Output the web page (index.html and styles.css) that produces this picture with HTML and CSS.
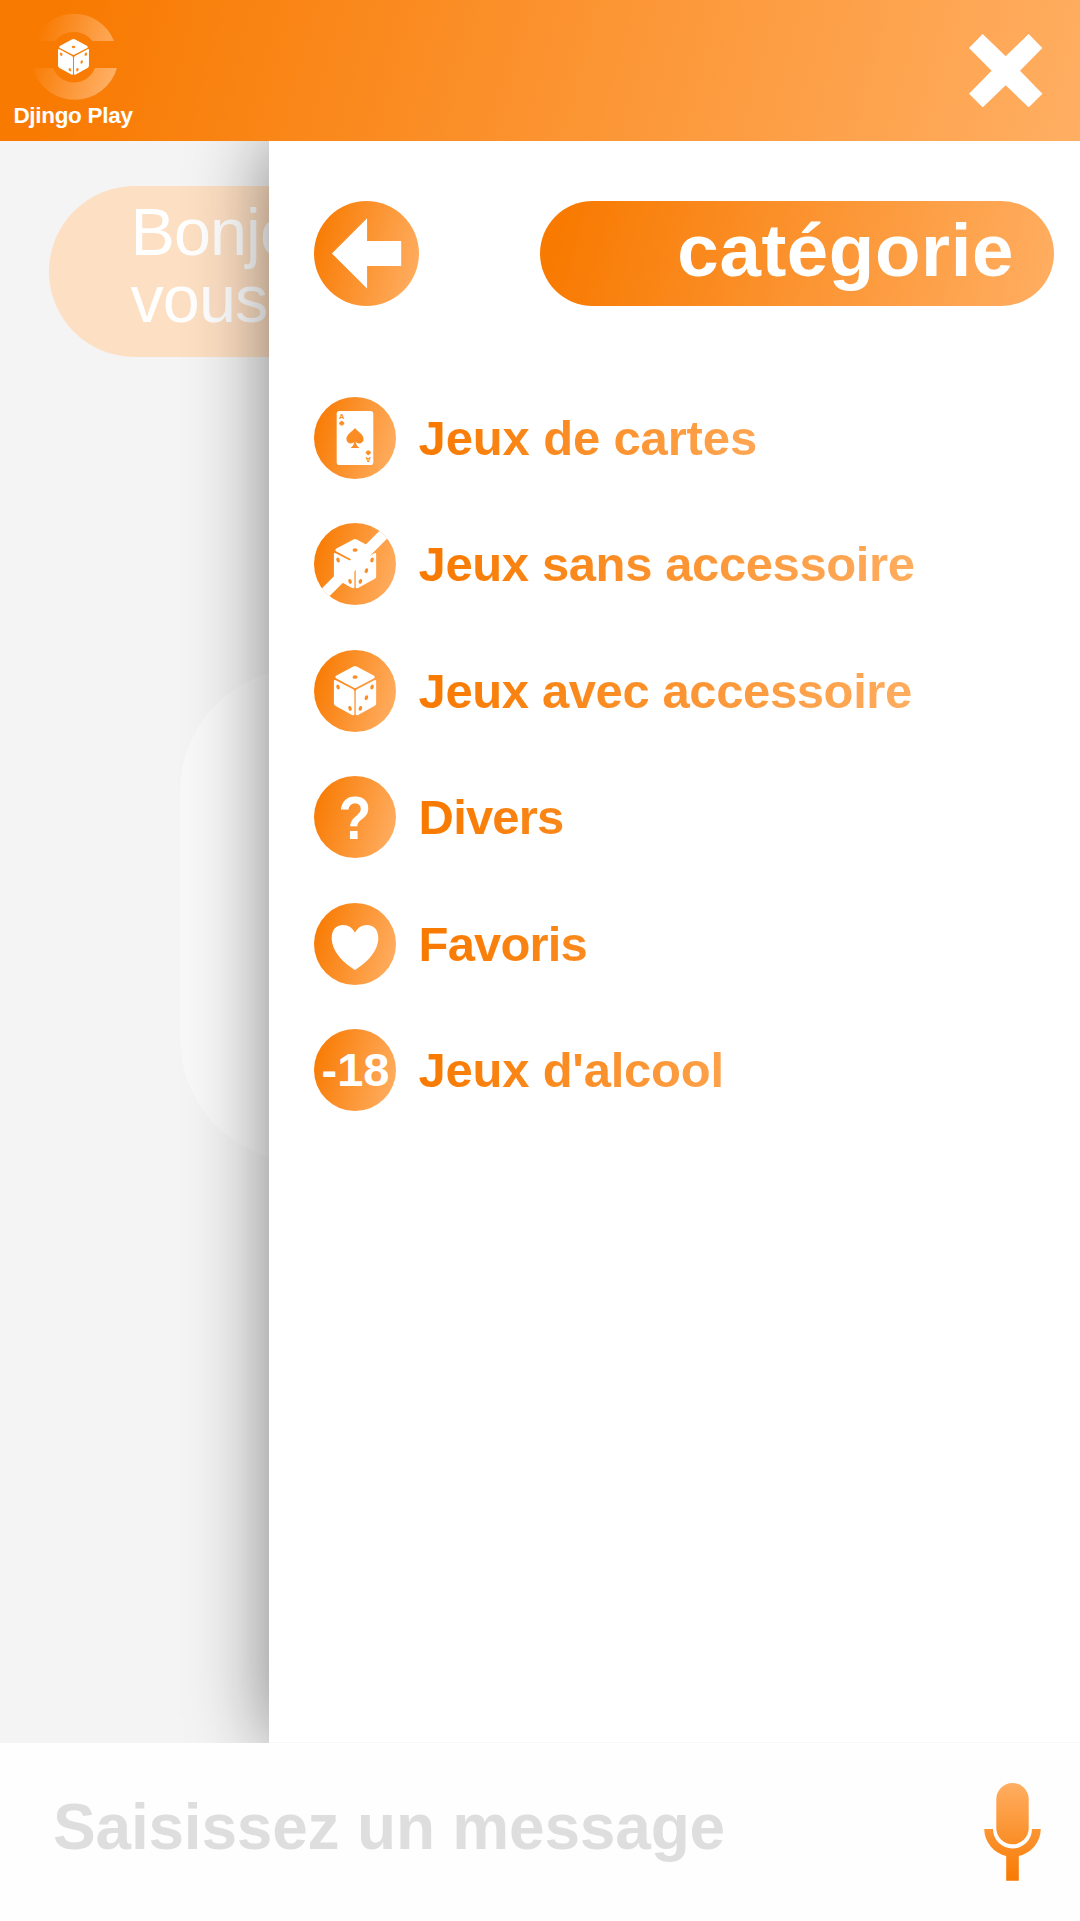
FILE: index.html
```html
<!DOCTYPE html>
<html lang="fr">
<head>
<meta charset="utf-8">
<title>Djingo Play</title>
<link rel="stylesheet" href="styles.css">
</head>
<body>
<svg class="defs" width="0" height="0" aria-hidden="true">
  <defs>
    <symbol id="die" viewBox="0 0 128 149">
      <path fill="#fff" d="M59 1.500Q64-1.500 69 1.500L121 29Q125 33 121 37L69 64.500Q64 67.500 59 64.500L7 37Q3 33 7 29Z"/>
      <path fill="#fff" d="M0 46Q0 40 6 42.500L58 70Q62 72.500 62 77V144Q62 149.500 55 147L6 120Q0 117 0 111Z"/>
      <path fill="#fff" d="M128 46Q128 40 122 42.500L70 70Q66 72.500 66 77V144Q66 149.500 73 147L122 120Q128 117 128 111Z"/>
      <g fill="#fb8d24">
        <ellipse cx="64" cy="33" rx="7.500" ry="5.500"/>
        <ellipse cx="13" cy="63" rx="5" ry="7.500" transform="rotate(-20 13 63)"/>
        <ellipse cx="49" cy="127" rx="5" ry="7.500" transform="rotate(-20 49 127)"/>
        <ellipse cx="115" cy="63" rx="5" ry="7.500" transform="rotate(20 115 63)"/>
        <ellipse cx="98" cy="95" rx="5" ry="7.500" transform="rotate(20 98 95)"/>
        <ellipse cx="80" cy="127" rx="5" ry="7.500" transform="rotate(20 80 127)"/>
      </g>
    </symbol>
    <linearGradient id="ring" gradientUnits="userSpaceOnUse" x1="36" y1="40" x2="116" y2="64">
      <stop offset="0" stop-color="#ffae62" stop-opacity="0"/>
      <stop offset="1" stop-color="#ffae62"/>
    </linearGradient>
    <linearGradient id="mic" gradientUnits="userSpaceOnUse" x1="28" y1="0" x2="28" y2="98">
      <stop offset="0" stop-color="#ffae62"/>
      <stop offset="1" stop-color="#f87a01"/>
    </linearGradient>
  </defs>
</svg>

<div class="app">
  <header class="header">
    <div class="brand">
      <svg class="brand-logo" viewBox="0 0 146 102">
        <path fill="url(#ring)" d="M34 41A43 43 0 0 1 114 41H92.500A24 24 0 0 0 55 41Z"/>
        <path fill="url(#ring)" d="M32.500 68A44 44 0 0 0 117 68H95A22.500 22.500 0 0 1 53 68Z"/>
        <use href="#die" x="58" y="39" width="31" height="36"/>
      </svg>
      <span class="brand-name">Djingo Play</span>
    </div>
    <svg class="close" viewBox="0 0 73.400 73.400">
      <path fill="#fff" d="M13.700 0L36.700 22.300L59.700 0L73.400 14L51 36.700L73.400 59.700L59.700 73.400L36.700 51.200L13.700 73.400L0 59.700L22.600 36.700L0 14Z"/>
    </svg>
  </header>

  <main class="content">
    <section class="chat">
      <p class="bubble bubble-bot">Bonjour<br>vous</p>
      <div class="bubble-user"></div>
    </section>

    <nav class="panel">
      <div class="panel-head">
        <svg class="back" viewBox="0 0 105.600 105.600">
          <path fill="#fff" d="M18 52.800L53.400 17.300V40.300H87.700V65.300H53.400V88Z"/>
        </svg>
        <h1 class="title">catégorie</h1>
      </div>
      <ul class="menu">
        <li class="item">
          <svg class="badge" viewBox="0 0 82 82">
            <rect x="22.700" y="14" width="36.600" height="54" rx="2.800" fill="#fff"/>
            <path fill="#fb8d24" d="M41 31C43.500 34.500 49.600 37 49.600 42C49.600 46.500 44 48 41.800 44.800C42 48 43.500 49.500 45.500 51H36.500C38.500 49.500 40 48 40.200 44.800C38 48 32.400 46.500 32.400 42C32.400 37 38.500 34.500 41 31Z"/>
            <g id="corner" fill="#fb8d24">
              <text class="card-letter" x="27.700" y="22">A</text>
              <circle cx="27.700" cy="25" r="1.300"/><circle cx="26.400" cy="26.400" r="1.300"/><circle cx="29" cy="26.400" r="1.300"/><path d="M27.200 26H28.200L29 28.400H26.400Z"/>
            </g>
            <use href="#corner" transform="rotate(180 41 41)"/>
          </svg>
          <span class="label label-cards">Jeux de cartes</span>
        </li>
        <li class="item">
          <svg class="badge" viewBox="0 0 82 82">
            <use href="#die" x="19.700" y="16" width="42.700" height="49.700"/>
            <path fill="#fff" d="M73.300 0H88.700L0 88.700V73.300Z"/>
          </svg>
          <span class="label label-long">Jeux sans accessoire</span>
        </li>
        <li class="item">
          <svg class="badge" viewBox="0 0 82 82">
            <use href="#die" x="19.700" y="16" width="42.700" height="49.700"/>
          </svg>
          <span class="label label-long">Jeux avec accessoire</span>
        </li>
        <li class="item">
          <svg class="badge" viewBox="0 0 82 82">
            <text class="glyph glyph-question" transform="translate(41 63.300) scale(.88 1)">?</text>
          </svg>
          <span class="label label-short">Divers</span>
        </li>
        <li class="item">
          <svg class="badge" viewBox="0 0 82 82">
            <path fill="#fff" d="M41 67C33 62 17.700 50.500 17.700 35C17.700 27 22 22 29 22C34.500 22 38.500 25 41 29.700C43.500 25 47.500 22 53 22C60 22 64.300 27 64.300 35C64.300 50.500 49 62 41 67Z"/>
          </svg>
          <span class="label label-short">Favoris</span>
        </li>
        <li class="item">
          <svg class="badge" viewBox="0 0 82 82">
            <text class="glyph glyph-age" x="41.500" y="56.500">-18</text>
          </svg>
          <span class="label label-alcohol">Jeux d'alcool</span>
        </li>
      </ul>
    </nav>
  </main>

  <footer class="composer">
    <span class="placeholder">Saisissez un message</span>
    <svg class="mic" viewBox="0 0 57 98">
      <g fill="url(#mic)">
        <rect x="12.300" y="0" width="32.400" height="61.300" rx="16.200"/>
        <path d="M.2 46H9A19.500 19.500 0 0 0 48 46H56.800A28.300 28.300 0 0 1 34.800 73V97.700H22.200V73A28.300 28.300 0 0 1 .2 46Z"/>
      </g>
    </svg>
  </footer>
</div>
</body>
</html>
```

FILE: styles.css
```css
* {
  box-sizing: border-box;
  margin: 0;
  padding: 0;
}

body {
  font-family: "Liberation Sans", Arial, Helvetica, sans-serif;
  background: #fefefe;
}

svg {
  display: block;
}

.defs {
  position: absolute;
}

.app {
  display: flex;
  flex-direction: column;
  width: 1080px;
  height: 1921px;
  overflow: hidden;
}

.header {
  z-index: 1;
  display: flex;
  flex: 0 0 141px;
  align-items: center;
  justify-content: space-between;
  padding-right: 37.500px;
  background: linear-gradient(105deg, #f87a01 6%, #ffae62);
}

.brand {
  display: flex;
  flex-direction: column;
  align-self: flex-start;
  width: 146px;
  text-align: center;
}

.brand-logo {
  width: 146px;
  height: 102px;
}

.brand-name {
  font-size: 22.500px;
  font-weight: bold;
  line-height: 27px;
  letter-spacing: -0.300px;
  color: #fff;
}

.close {
  width: 73.400px;
  height: 73.400px;
}

.content {
  display: flex;
  flex: 1;
  min-height: 0;
  overflow: hidden;
  background: #f4f4f4;
}

.chat {
  flex: none;
  width: 269px;
  padding: 45px 0 0 48.500px;
}

.bubble {
  width: 700px;
  height: 171px;
  padding: 13px 0 0 82px;
  border-radius: 85.500px;
  background: #fddfc3;
  font-size: 66.500px;
  line-height: 67px;
  letter-spacing: -0.900px;
  color: #fff;
}

.bubble-user {
  width: 800px;
  height: 494px;
  margin: 311px 0 0 131.500px;
  border-radius: 124px;
  background: #f8f8f8;
}

.panel {
  z-index: 1;
  flex: 1;
  min-width: 0;
  padding: 60px 26px 0 45.300px;
  border-bottom: 1px solid #f8f8f8;
  background: #fff;
  box-shadow: 0 0 74px rgba(0, 0, 0, 0.480);
}

.panel-head {
  display: flex;
  justify-content: space-between;
}

.back {
  width: 105px;
  height: 105px;
  border-radius: 50%;
  background: linear-gradient(105deg, #f87a01 5%, #ffae62 95%);
}

.title {
  width: 514px;
  height: 105px;
  padding-right: 40px;
  border-radius: 53px;
  background: linear-gradient(105deg, #f87a01 5%, #ffae62);
  font-size: 74.500px;
  line-height: 100px;
  letter-spacing: 0.600px;
  text-align: right;
  color: #fff;
}

.menu {
  display: flex;
  flex-direction: column;
  gap: 44.600px;
  margin-top: 90.500px;
  list-style: none;
}

.item {
  display: flex;
  align-items: center;
  gap: 22.300px;
  height: 82px;
}

.badge {
  width: 82px;
  height: 82px;
  border-radius: 50%;
  background: linear-gradient(105deg, #f87a01 5%, #ffae62 95%);
}

.label {
  background: linear-gradient(105deg, #f87a01 5%, #ffae62) no-repeat;
  background-clip: text;
  font-size: 49px;
  font-weight: bold;
  line-height: 60px;
  color: transparent;
}

.label-cards {
  background-size: 390px 100%;
  letter-spacing: -0.150px;
}

.label-long {
  background-size: 500px 100%;
  letter-spacing: -0.400px;
}

.label-short {
  background-size: 500px 100%;
  letter-spacing: -0.850px;
}

.label-alcohol {
  background-size: 390px 100%;
  letter-spacing: -0.250px;
}

.glyph {
  font-weight: bold;
  text-anchor: middle;
  fill: #fff;
}

.glyph-question {
  font-size: 61px;
}

.glyph-age {
  font-size: 47px;
}

.card-letter {
  font-size: 7.500px;
  font-weight: bold;
  text-anchor: middle;
}

.composer {
  z-index: 1;
  display: flex;
  flex: 0 0 178px;
  align-items: center;
  justify-content: space-between;
  padding: 0 39px 0 53px;
  background: #fefefe;
}

.placeholder {
  padding-bottom: 10px;
  font-size: 64px;
  font-weight: bold;
  letter-spacing: -0.200px;
  color: #dedede;
}

.mic {
  width: 57px;
  height: 98px;
}
```
